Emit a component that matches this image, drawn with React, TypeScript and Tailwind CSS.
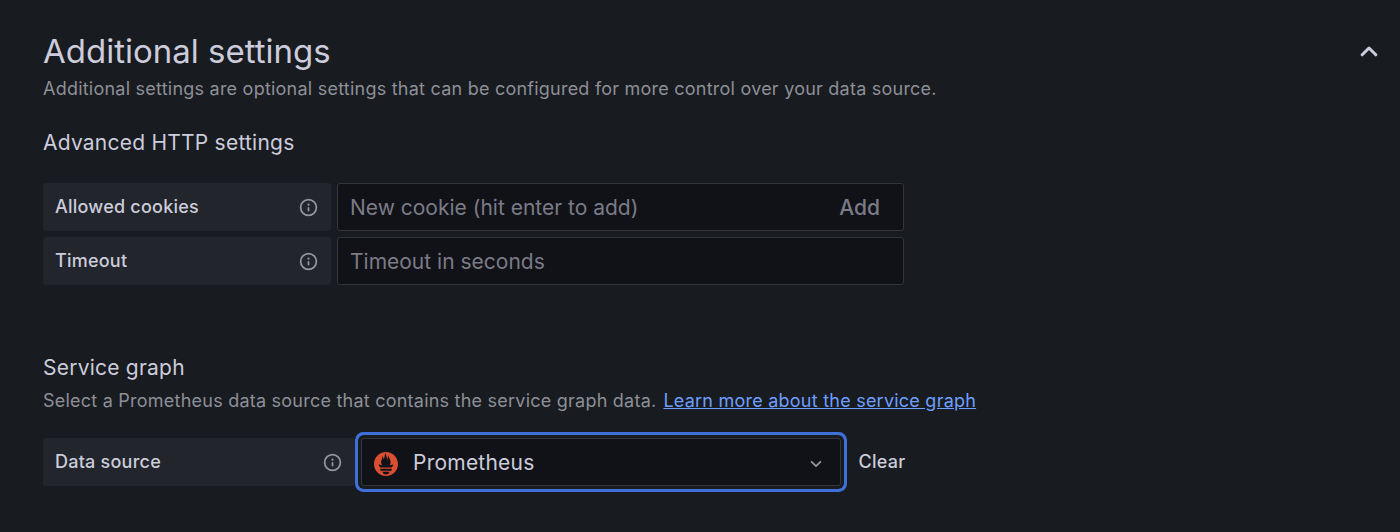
import type { ReactNode } from 'react';

function InfoIcon() {
  return (
    <svg className="ml-auto size-[21px] shrink-0 text-[#9495a0]" viewBox="0 0 24 24" fill="currentColor">
      <path d="M12,2A10,10,0,1,0,22,12,10.01114,10.01114,0,0,0,12,2Zm0,18a8,8,0,1,1,8-8A8.00917,8.00917,0,0,1,12,20Zm0-8.5a1,1,0,0,0-1,1v3a1,1,0,0,0,2,0v-3A1,1,0,0,0,12,11.5Zm0-4a1.25,1.25,0,1,0,1.25,1.25A1.25,1.25,0,0,0,12,7.5Z" />
    </svg>
  );
}

function PrometheusLogo() {
  return (
    <svg className="mt-[3px] size-6 shrink-0" viewBox="0 0 24 24" fill="#da4e31">
      <path d="M12 0C5.373 0 0 5.372 0 12c0 6.627 5.373 12 12 12s12-5.373 12-12c0-6.628-5.373-12-12-12zm0 22.46c-1.885 0-3.414-1.26-3.414-2.814h6.828c0 1.553-1.528 2.813-3.414 2.813zm5.64-3.745H6.36v-2.046h11.28v2.046zm-.04-3.098H6.391c-.037-.043-.075-.086-.111-.13-1.155-1.401-1.427-2.133-1.69-2.879-.005-.025 1.4.287 2.395.511 0 0 .513.119 1.262.255-.72-.843-1.147-1.915-1.147-3.01 0-2.406 1.845-4.508 1.18-6.207.648.053 1.34 1.367 1.387 3.422.689-.951.977-2.69.977-3.755 0-1.103.727-2.385 1.454-2.429-.648 1.069.168 1.984.893 4.256.272.854.237 2.29.447 3.201.07-1.892.395-4.652 1.595-5.605-.529 1.2.079 2.702.494 3.424.671 1.164 1.078 2.047 1.078 3.716a4.642 4.642 0 01-1.11 2.996c.792-.149 1.34-.283 1.34-.283l2.573-.502s-.374 1.538-1.81 3.019z" />
    </svg>
  );
}

function Label({ children, className }: { children: ReactNode; className: string }) {
  return (
    <div className={`flex h-12 items-center rounded-[3px] bg-[#22252b] px-3 text-[18px] font-medium tracking-[0.23px] ${className}`}>
      <span className="pb-[2px]">{children}</span>
      <InfoIcon />
    </div>
  );
}

export default function App() {
  return (
    <main className="h-[532px] overflow-hidden bg-[#181b1f] pt-[31px] pr-[22px] pl-[43px] font-['Inter',sans-serif] text-[#ccccdc]">
      <header className="flex h-[40px] items-center justify-between">
        <h1 className="text-[33px] leading-[40px]">Additional settings</h1>
        <svg className="h-[11px] w-[18px]" viewBox="0 0 18 11" fill="none" stroke="currentColor" strokeWidth="3" strokeLinecap="round" strokeLinejoin="round">
          <path d="M2.2 8.8 9 2l6.8 6.8" />
        </svg>
      </header>
      <p className="mt-[4px] text-[18px] leading-[27px] tracking-[0.23px] text-[#8e8f98]">Additional settings are optional settings that can be configured for more control over your data source.</p>
      <section className="mt-[25px]">
        <h2 className="text-[21px] leading-[32px] tracking-[0.23px]">Advanced HTTP settings</h2>
        <div className="mt-[24px] flex gap-[6px]">
          <Label className="w-[288px]">Allowed cookies</Label>
          <div className="flex h-12 w-[567px] items-center justify-between rounded-[3px] border border-[#33353b] bg-[#111217] pt-[2px] pr-[23px] pl-3 text-[21px] text-[#7b7b87]">
            <span>New cookie (hit enter to add)</span>
            <button className="font-medium">Add</button>
          </div>
        </div>
        <div className="mt-[6px] flex gap-[6px]">
          <Label className="w-[288px]">Timeout</Label>
          <div className="flex h-12 w-[567px] items-center rounded-[3px] border border-[#33353b] bg-[#111217] pt-[2px] pl-3 text-[21px] text-[#7b7b87]">Timeout in seconds</div>
        </div>
      </section>
      <section className="mt-[67px]">
        <h2 className="text-[21px] leading-[32px] tracking-[0.23px]">Service graph</h2>
        <p className="mt-[3px] flex text-[18px] leading-[27px] tracking-[0.23px] text-[#8e8f98]">
          <span>Select a Prometheus data source that contains the service graph data.</span>
          <a className="ml-[7px] text-[#6e9fff] underline">Learn more about the service graph</a>
        </p>
        <div className="mt-[24px] flex">
          <Label className="mr-[6px] w-[312px]">Data source</Label>
          <div className="flex h-12 w-[480px] items-center rounded-[3px] border border-[#33353b] bg-[#111217] pr-[18px] pl-3 ring-3 ring-[#3d71d9] ring-offset-3 ring-offset-[#181b1f]">
            <PrometheusLogo />
            <span className="ml-[15px] pt-[2px] text-[21px] tracking-[0.23px]">Prometheus</span>
            <svg className="mt-[4px] ml-auto h-[8px] w-[12px] text-[#9495a0]" viewBox="0 0 12 8" fill="none" stroke="currentColor" strokeWidth="1.8" strokeLinecap="round" strokeLinejoin="round">
              <path d="m1.6 1.8 4.4 4.4 4.4-4.4" />
            </svg>
          </div>
          <button className="ml-[17.5px] pb-[2px] text-[18px] font-medium tracking-[0.23px]">Clear</button>
        </div>
      </section>
    </main>
  );
}
